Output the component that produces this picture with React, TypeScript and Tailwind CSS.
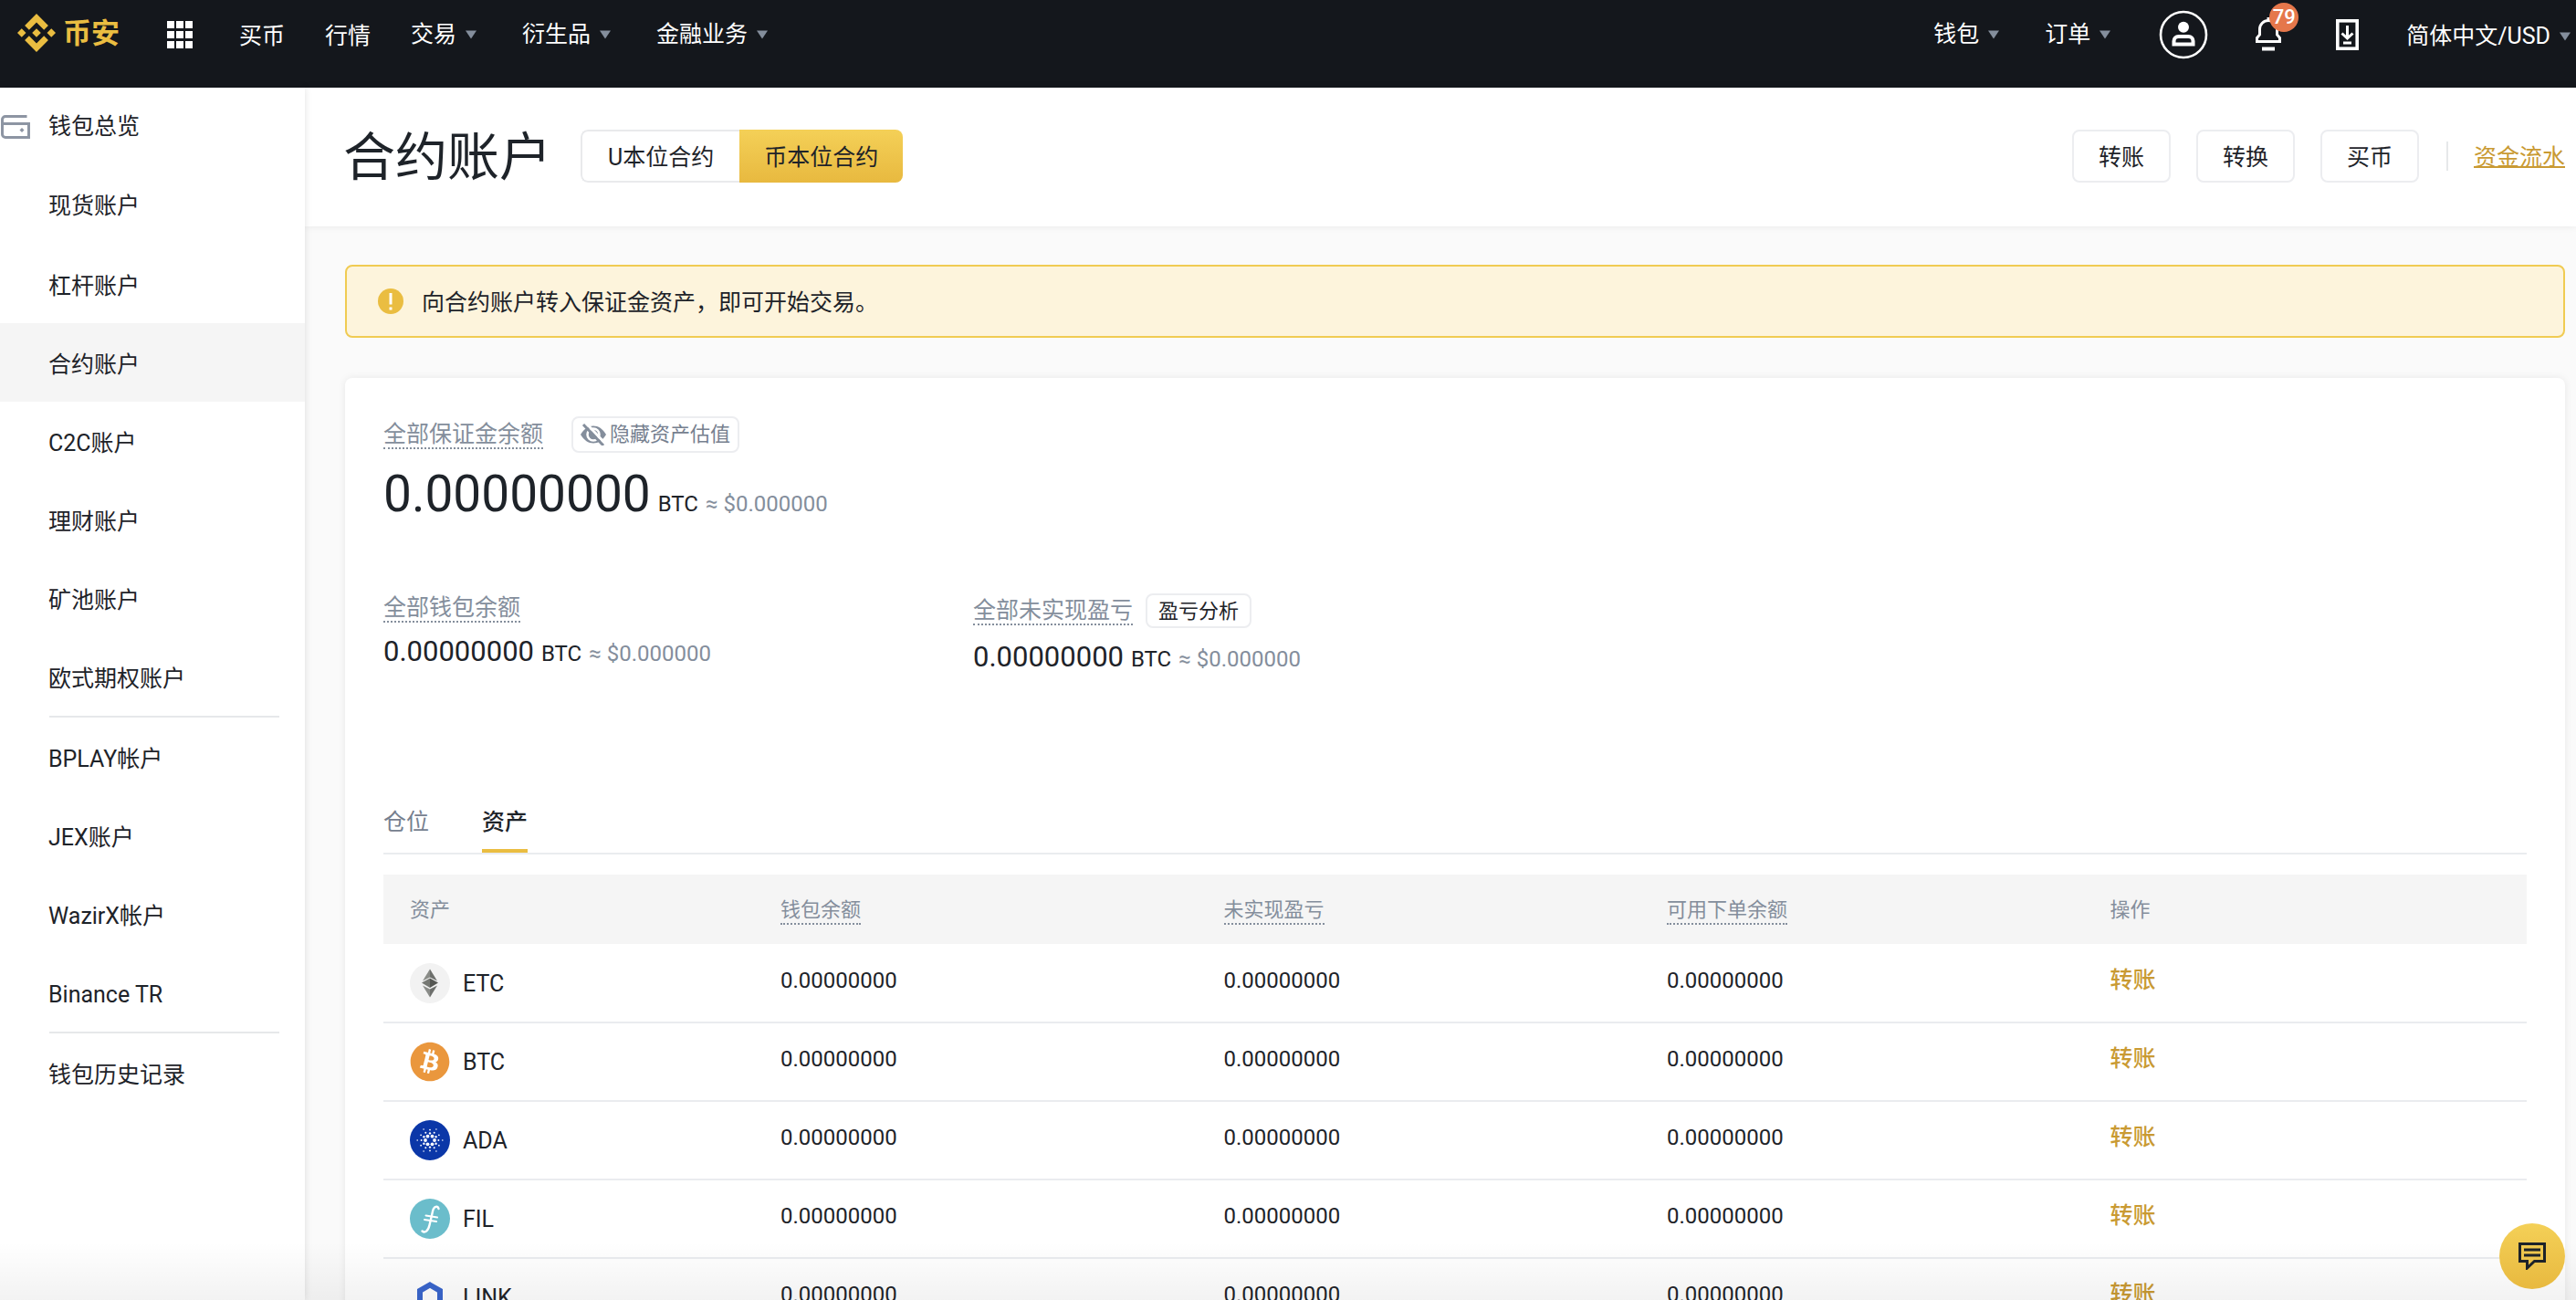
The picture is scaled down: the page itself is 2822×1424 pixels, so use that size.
import { useState } from "react"
import type { ReactNode } from "react"
import { FaBitcoin } from "react-icons/fa"

interface NavItem {
    label: string;
    dropdown?: boolean;
}

interface Asset {
    symbol: string;
    icon: ReactNode;
}

const navItems: NavItem[] = [
    { label: "买币" },
    { label: "行情" },
    { label: "交易", dropdown: true },
    { label: "衍生品", dropdown: true },
    { label: "金融业务", dropdown: true },
];

const accountGroups: string[][] = [
    ["杠杆账户", "合约账户", "C2C账户", "理财账户", "矿池账户", "欧式期权账户"],
    ["BPLAY帐户", "JEX账户", "WazirX帐户", "Binance TR"],
    ["钱包历史记录"],
];

function Caret() {
    return (
        <svg className="w-3 h-[10px]" viewBox="0 0 12 10">
            <path d="M0 0.5H12L6 9.5Z" fill="#848e9c" />
        </svg>
    );
}

function BinanceMark() {
    return (
        <svg className="w-[42px] h-[42px]" viewBox="0 0 126.61 126.61" fill="#eabd41">
            <path d="M38.73 53.2L63.3 28.63L87.88 53.21L102.18 38.92L63.3 0L24.44 38.9Z" />
            <path d="M0 63.31L14.3 49.01L28.6 63.31L14.3 77.61Z" />
            <path d="M38.73 73.41L63.3 97.98L87.88 73.4L102.18 87.69L63.3 126.61L24.41 87.72Z" />
            <path d="M98 63.31L112.3 49.01L126.6 63.31L112.3 77.61Z" />
            <path d="M77.81 63.3L63.3 48.78L48.8 63.3L63.3 77.82Z" />
        </svg>
    );
}

function GridIcon() {
    return (
        <svg className="w-7 h-[30px]" viewBox="0 0 28 30" fill="white">
            {[0, 10, 20].map((x) => [0, 11, 22].map((y) => (
                <rect key={`${x}-${y}`} x={x} y={y} width="8" height="8" />
            )))}
        </svg>
    );
}

function UserIcon() {
    return (
        <svg className="w-[54px] h-[54px]" viewBox="0 0 54 54" fill="none">
            <circle cx="27" cy="27" r="25" stroke="white" strokeWidth="2.6" />
            <circle cx="27" cy="18.7" r="6" fill="white" />
            <path d="M16.5 37.5V34A5 5 0 0 1 21.5 29H32.5A5 5 0 0 1 37.5 34V37.5Z" stroke="white" strokeWidth="4" />
        </svg>
    );
}

function BellIcon() {
    return (
        <svg className="w-7 h-[38px]" viewBox="0 0 28 38" fill="none" stroke="white" strokeWidth="3">
            <path d="M1.5 26.5V22.5L4.5 19V13A9.5 9.5 0 0 1 23.5 13V19L26.5 22.5V26.5Z" />
            <path d="M14 0V4" />
            <path d="M7 34.5H21" strokeWidth="4" />
        </svg>
    );
}

function DownloadIcon() {
    return (
        <svg className="w-[25px] h-[34px]" viewBox="0 0 25 34" fill="none" stroke="white">
            <rect x="1.8" y="1.8" width="21.4" height="30.4" strokeWidth="3.6" />
            <path d="M12.5 7V20M6.5 15.5L12.5 21L18.5 15.5" strokeWidth="3" />
            <path d="M8 26H17" strokeWidth="3" />
        </svg>
    );
}

function WalletIcon() {
    return (
        <svg className="w-8 h-[26px]" viewBox="0 0 32 26" fill="none" stroke="#8d95a3" strokeWidth="3">
            <path d="M28.5 1.5H5A3.5 3.5 0 0 0 1.5 5V21A3.5 3.5 0 0 0 5 24.5H30.5V9.5H2" />
            <path d="M23 14L25.5 16.5L23 19L20.5 16.5Z" fill="#8d95a3" stroke="none" />
        </svg>
    );
}

function EyeOffIcon() {
    return (
        <svg className="w-7 h-6" viewBox="0 0 28 24">
            <path d="M0 12C4 5.5 8.5 2.5 14 2.5S24 5.5 28 12C24 18.5 19.5 21.5 14 21.5S4 18.5 0 12Z" fill="#848e9c" />
            <circle cx="14" cy="12" r="6.5" fill="none" stroke="white" strokeWidth="2.5" />
            <path d="M5.5 -1L27 22" stroke="white" strokeWidth="3" />
            <path d="M3 1L25 24" stroke="#848e9c" strokeWidth="3" />
        </svg>
    );
}

function EtcIcon() {
    return (
        <svg className="w-11 h-11" viewBox="0 0 44 44">
            <circle cx="22" cy="22" r="22" fill="#f2f2f2" />
            <path d="M22 6.5L30 19.5L22 15.5Z" fill="#6d6f6c" />
            <path d="M22 6.5L14 19.5L22 15.5Z" fill="#8a8c88" />
            <path d="M22 16.5L31 21.5L22 27Z" fill="#555753" />
            <path d="M22 16.5L13 21.5L22 27Z" fill="#767873" />
            <path d="M30 24.5L22 37.5V28.5Z" fill="#6d6f6c" />
            <path d="M14 24.5L22 37.5V28.5Z" fill="#8a8c88" />
        </svg>
    );
}

function AdaIcon() {
    const rings = [
        { n: 6, radius: 5, dot: 1.9, turn: 0 },
        { n: 6, radius: 7.6, dot: 1.2, turn: 30 },
        { n: 6, radius: 9.4, dot: 1, turn: 0 },
        { n: 6, radius: 11.4, dot: 0.9, turn: 30 },
        { n: 6, radius: 13.8, dot: 0.8, turn: 0 },
    ];
    return (
        <svg className="w-11 h-11" viewBox="0 0 44 44">
            <circle cx="22" cy="22" r="22" fill="#0b37a8" />
            {rings.map((ring, r) => Array.from({ length: ring.n }, (_, i) => {
                const a = ((360 / ring.n) * i + ring.turn) * Math.PI / 180;
                return (
                    <circle
                        key={`${r}-${i}`}
                        cx={22 + ring.radius * Math.cos(a)}
                        cy={22 + ring.radius * Math.sin(a)}
                        r={ring.dot}
                        fill="white"
                    />
                );
            }))}
        </svg>
    );
}

function FilIcon() {
    return (
        <svg className="w-11 h-11" viewBox="0 0 44 44" fill="none" stroke="white" strokeLinecap="round">
            <circle cx="22" cy="22" r="22" fill="#6bbdcb" stroke="none" />
            <path d="M31.5 11C30.5 7.5 26.5 8 25.2 13L21.5 29C20 35.5 16.5 38 13.5 35.5" strokeWidth="2.4" />
            <path d="M17.5 18.5L30 20.5M16 23L29 25" strokeWidth="2" />
        </svg>
    );
}

function LinkIcon() {
    return (
        <svg className="w-11 h-11" viewBox="0 0 44 44" fill="none">
            <path d="M22 8.5L33 14.8V29.2L22 35.5L11 29.2V14.8Z" stroke="#3a66cd" strokeWidth="6" />
        </svg>
    );
}

const assets: Asset[] = [
    { symbol: "ETC", icon: <EtcIcon /> },
    { symbol: "BTC", icon: <FaBitcoin className="w-11 h-11 text-[#ea973d]" /> },
    { symbol: "ADA", icon: <AdaIcon /> },
    { symbol: "FIL", icon: <FilIcon /> },
    { symbol: "LINK", icon: <LinkIcon /> },
];

function TopBar() {
    return (
        <header className="h-24 shrink-0 bg-[#14171c] text-white">
            <div className="h-[76px] pl-[19px] pr-[6px] flex items-center">
                <a href="#home" className="flex items-center gap-2 pb-1 text-[31px] leading-none font-bold text-[#eabd41]">
                    <BinanceMark />
                    币安
                </a>
                <button aria-label="菜单" className="ml-[52px] mr-[51px]"><GridIcon /></button>
                <nav className="flex items-center">
                    {navItems.map((item) => (
                        <a key={item.label} href="#nav" className={`flex items-center gap-[10px] ${item.dropdown ? 'mr-[50px]' : 'mr-11 pt-1'}`}>
                            {item.label}
                            {item.dropdown && <Caret />}
                        </a>
                    ))}
                </nav>

                {/* account tools */}
                <div className="ml-auto flex items-center">
                    <a href="#wallet" className="flex items-center gap-[10px] mr-[50px]">钱包<Caret /></a>
                    <a href="#orders" className="flex items-center gap-[10px] mr-[53px]">订单<Caret /></a>
                    <button aria-label="用户" className="mr-[52px]"><UserIcon /></button>
                    <button aria-label="通知" className="relative mr-[60px]">
                        <BellIcon />
                        <span className="absolute -top-4 left-[15px] w-8 h-8 rounded-full bg-[#e5774b] flex items-center justify-center text-[22px] leading-none font-medium">79</span>
                    </button>
                    <button aria-label="下载" className="mr-[52px]"><DownloadIcon /></button>
                    <button className="flex items-center gap-[10px] pt-1">简体中文/USD<Caret /></button>
                </div>
            </div>
        </header>
    );
}

function Sidebar() {
    return (
        <aside className="w-[334px] shrink-0 bg-white shadow-[0_0_8px_rgba(0,0,0,0.12)] z-10">
            <a href="#overview" className="h-[84px] pl-px pt-[2px] flex items-center gap-5">
                <WalletIcon />
                钱包总览
            </a>
            <a href="#spot" className="h-[86px] pl-[53px] pt-[6px] mb-[2px] flex items-center">现货账户</a>
            {accountGroups.map((group, i) => (
                <div key={i}>
                    {i > 0 && <hr className="ml-[54px] mr-7 border-0 h-[2px] bg-[#e6e8ea]" />}
                    {group.map((name) => (
                        <a
                            key={name}
                            href="#account"
                            className={`h-[86px] pl-[53px] pt-[6px] flex items-center ${name === "合约账户" ? 'bg-[#f5f5f5]' : ''}`}
                        >
                            {name}
                        </a>
                    ))}
                </div>
            ))}
        </aside>
    );
}

function PageHeader() {
    const [margin, setMargin] = useState<'usd' | 'coin'>('coin');
    const tabs = [
        { id: 'usd' as const, label: 'U本位合约' },
        { id: 'coin' as const, label: '币本位合约' },
    ];

    return (
        <div className="h-[152px] pl-[42px] pr-3 pb-[2px] bg-white flex items-center shadow-[0_0_8px_rgba(0,0,0,0.08)]">
            <h1 className="text-[57px] leading-[72px] pt-1 mr-8">合约账户</h1>
            <div className="h-[58px] flex rounded-lg overflow-hidden">
                {tabs.map((tab) => (
                    <button
                        key={tab.id}
                        onClick={() => setMargin(tab.id)}
                        className={`pt-1 border-[#e9eaec] ${margin === tab.id
                            ? 'px-[27px] bg-linear-to-b from-[#f4d057] to-[#e8b93f]'
                            : 'px-7 border-2 border-r-0 rounded-l-lg'
                            }`}
                    >
                        {tab.label}
                    </button>
                ))}
            </div>
            <div className="ml-auto flex items-center gap-7">
                {['转账', '转换', '买币'].map((label) => (
                    <button key={label} className="h-[58px] px-[27px] pt-1 border-2 border-[#ecedf0] rounded-lg">{label}</button>
                ))}
                <div className="ml-[2px] w-[2px] h-8 bg-[#e6e8ea]"></div>
                <a href="#history" className="pt-1 text-[#c99a33] underline decoration-2">资金流水</a>
            </div>
        </div>
    );
}

function Amount({ large }: { large?: boolean }) {
    return (
        <div className="flex items-baseline gap-2">
            <span className={large ? 'text-[55px] leading-[72px]' : 'text-[31px] leading-10'}>0.00000000</span>
            <span className="text-2xl leading-8">BTC</span>
            <span className="text-2xl leading-8 text-[#848e9c]">≈ $0.000000</span>
        </div>
    );
}

function Hint({ children }: { children: ReactNode }) {
    return <span className="pt-[2px] border-b-2 border-dotted border-[#848e9c] leading-7 text-[#848e9c]">{children}</span>;
}

function Balances() {
    return (
        <section>
            <div className="flex items-center gap-[31px] mb-[9px]">
                <Hint>全部保证金余额</Hint>
                <button className="h-10 px-2 border-2 border-[#ecedf0] rounded-lg flex items-center gap-1 text-[22px] leading-none text-[#76808f]">
                    <EyeOffIcon />
                    隐藏资产估值
                </button>
            </div>
            <Amount large />
            <div className="mt-[73px] flex items-start">
                <div className="w-[646px] flex flex-col items-start gap-3">
                    <Hint>全部钱包余额</Hint>
                    <Amount />
                </div>
                <div className="flex flex-col items-start gap-3">
                    <div className="flex items-center gap-[14px]">
                        <Hint>全部未实现盈亏</Hint>
                        <button className="h-[38px] px-3 pt-[2px] border-2 border-[#ecedf0] rounded-lg text-[22px] leading-none">盈亏分析</button>
                    </div>
                    <Amount />
                </div>
            </div>
        </section>
    );
}

function AssetTable() {
    const heads = ["钱包余额", "未实现盈亏", "可用下单余额"];
    return (
        <table className="w-full table-fixed mt-[22px] text-left">
            <thead>
                <tr className="h-[76px] bg-[#f5f5f5] text-[22px] text-[#848e9c]">
                    <th className="w-[406px] pl-[29px] pt-[2px] font-normal">资产</th>
                    {heads.map((head) => (
                        <th key={head} className="pl-[29px] pt-[2px] font-normal">
                            <span className="pb-[2px] border-b-2 border-dotted border-[#848e9c]">{head}</span>
                        </th>
                    ))}
                    <th className="pl-[29px] pt-[2px] font-normal">操作</th>
                </tr>
            </thead>
            <tbody>
                {assets.map((asset) => (
                    <tr key={asset.symbol} className="h-[86px] border-b-2 border-[#eaecef]">
                        <td className="pl-[29px]">
                            <div className="flex items-center gap-[14px]">
                                {asset.icon}
                                <span className="pt-[2px]">{asset.symbol}</span>
                            </div>
                        </td>
                        {heads.map((head) => (
                            <td key={head} className="pl-[29px] pb-[6px] text-2xl">0.00000000</td>
                        ))}
                        <td className="pl-[29px] pb-[6px]">
                            <button className="text-[#c99a33] font-medium">转账</button>
                        </td>
                    </tr>
                ))}
            </tbody>
        </table>
    );
}

export default function App() {
    const [view, setView] = useState<'positions' | 'assets'>('assets');

    return (
        <div className="relative h-screen overflow-hidden flex flex-col bg-[#fafafa] font-[Roboto,'Noto_Sans_CJK_SC',sans-serif] text-[25px] leading-8 text-[#1e2329]">
            <TopBar />
            <div className="flex-1 min-h-0 flex">
                <Sidebar />
                <main className="flex-1 min-w-0">
                    <PageHeader />
                    <div className="pl-11 pr-3 pt-[42px]">
                        {/* margin notice */}
                        <div className="h-20 px-[34px] border-2 border-[#f0cb52] rounded-lg bg-[#fdf4dc] flex items-center gap-5">
                            <svg className="w-7 h-7" viewBox="0 0 28 28">
                                <circle cx="14" cy="14" r="14" fill="#eabd41" />
                                <rect x="12.5" y="5" width="3" height="12.5" fill="white" />
                                <rect x="12.5" y="20.5" width="3" height="3" fill="white" />
                            </svg>
                            <p className="pt-1">向合约账户转入保证金资产，即可开始交易。</p>
                        </div>

                        <div className="mt-11 p-[42px] bg-white rounded-lg shadow-[0_0_8px_rgba(0,0,0,0.08)]">
                            <Balances />
                            <div className="mt-[140px] flex gap-[58px] border-b-2 border-[#eaecef]">
                                <button
                                    onClick={() => setView('positions')}
                                    className={`pt-[2px] pb-[10px] leading-[38px] border-b-4 ${view === 'positions' ? 'border-[#eabd41] font-medium' : 'border-transparent text-[#76808f]'}`}
                                >
                                    仓位
                                </button>
                                <button
                                    onClick={() => setView('assets')}
                                    className={`pt-[2px] pb-[10px] leading-[38px] border-b-4 ${view === 'assets' ? 'border-[#eabd41] font-medium' : 'border-transparent text-[#76808f]'}`}
                                >
                                    资产
                                </button>
                            </div>
                            <AssetTable />
                        </div>
                    </div>
                </main>
            </div>

            {/* fade along the bottom edge */}
            <div className="absolute inset-x-0 bottom-0 h-16 z-20 pointer-events-none bg-linear-to-b from-transparent to-black/5"></div>

            <button aria-label="客服" className="absolute bottom-3 right-3 z-30 w-[72px] h-[72px] rounded-full bg-linear-to-b from-[#f4d057] to-[#e8b93f] flex items-center justify-center">
                <svg className="w-[30px] h-[30px]" viewBox="0 0 30 30" fill="none" stroke="#1e2329" strokeWidth="3">
                    <path d="M1.5 1.5H28.5V20.5H17.5L9.5 28V20.5H1.5Z" />
                    <path d="M6 8H24M6 14H24" />
                </svg>
            </button>
        </div>
    );
}
